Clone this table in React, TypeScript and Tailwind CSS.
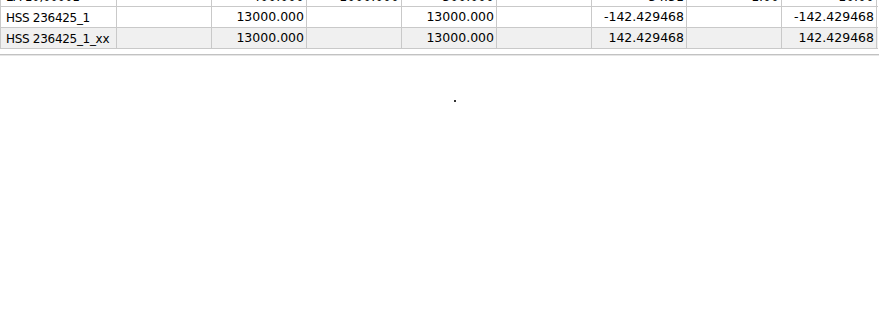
const cols = "grid grid-cols-[116px_repeat(8,95px)]";

type Row = { cells: string[]; shaded?: boolean; cut?: boolean };

const rows: Row[] = [
  { cells: ["EA 10,00001", "", "400.000", "1000.000", "300.000", "", "34.51", "1.00", "10.00"], cut: true },
  { cells: ["HSS 236425_1", "", "13000.000", "", "13000.000", "", "-142.429468", "", "-142.429468"] },
  { cells: ["HSS 236425_1_xx", "", "13000.000", "", "13000.000", "", "142.429468", "", "142.429468"], shaded: true },
];

function GridRow({ row }: { row: Row }) {
  return (
    <div className={`${cols} h-[21px] border-b border-[#c9c9c9] ${row.shaded ? "bg-[#f0f0f0]" : "bg-white"}`}>
      {row.cells.map((c, i) => (
        <div
          key={i}
          className={`border-r border-[#c9c9c9] flex items-center overflow-hidden whitespace-nowrap ${
            row.cut ? "pt-[2px]" : "pt-[1px]"
          } ${i === 0 ? "pl-[5px] justify-start text-[12px] tracking-[-0.3px]" : "pr-[2px] justify-end"}`}
        >
          {c}
        </div>
      ))}
    </div>
  );
}

export default function App() {
  return (
    <div className="w-[879px] h-[321px] bg-white overflow-hidden text-[12.5px] text-black font-['DejaVu_Sans',sans-serif] leading-none">
      <div className="-mt-[14px] w-[878px] border-l border-[#c9c9c9]">
        {rows.map((r, i) => (
          <GridRow key={i} row={r} />
        ))}
      </div>
      <div className="mt-[5px] h-[2px] border-t border-[#c2c2c2] bg-[#e6e6e6]" />
      <div className="flex justify-center pt-[44px] pl-[30px]">
        <div className="w-[2px] h-[2px] bg-[#333]" />
      </div>
    </div>
  );
}
